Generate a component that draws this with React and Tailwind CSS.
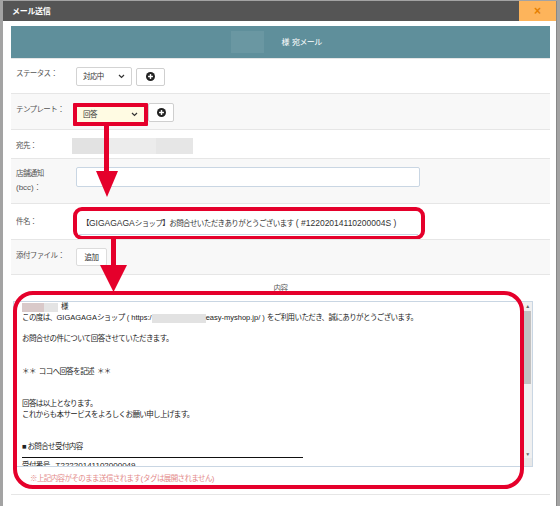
import React from 'react';

const RED = '#e5002b';

// latin runs keep normal spacing, only the kana/kanji are tightened
const L = ({ children, size = 'text-[8px]' }) => <span className={`tracking-normal ${size}`}>{children}</span>;

const PlusBtn = ({ className }) => (
  <div className={`flex items-center justify-center border border-[#cfcfcf] rounded-[2px] bg-white ${className}`}>
    <svg width="9" height="9" viewBox="0 0 10 10">
      <circle cx="5" cy="5" r="5" fill="#222" />
      <rect x="2.3" y="4.2" width="5.4" height="1.6" fill="#fff" />
      <rect x="4.2" y="2.3" width="1.6" height="5.4" fill="#fff" />
    </svg>
  </div>
);

const Chevron = () => (
  <svg width="7" height="5" viewBox="0 0 7 5" className="ml-auto">
    <path d="M1 1 L3.5 3.5 L6 1" fill="none" stroke="#333" strokeWidth="1.2" />
  </svg>
);

const Row = ({ label, h, gray, children, labelTop = 'pt-[10px]' }) => (
  <div className={`flex border-t border-[#e6e6e6] ${h} ${gray ? 'bg-[#f8f8f8]' : 'bg-white'}`}>
    <div className={`w-[65px] shrink-0 pl-[5px] text-[#555] ${labelTop}`}>{label}</div>
    <div className="flex-1">{children}</div>
  </div>
);

const App = () => {
  return (
    <div className="relative w-[560px] h-[506px] overflow-hidden bg-[#a3a3a3] font-['Liberation_Sans','Noto_Sans_CJK_JP',sans-serif] text-[7.5px] leading-[11px] tracking-[-0.6px] text-[#333]">
      <div className="ml-[3px] mt-[1px] w-[554px] h-[505px] bg-white flex flex-col border-r border-[#888]">
        {/* title bar */}
        <div className="h-[20px] bg-[#555555] flex items-center shrink-0">
          <span className="pl-[9px] text-white font-bold text-[8px] tracking-[-0.3px]">メール送信</span>
          <div className="ml-auto w-[37px] h-full bg-[#fdb45b] flex items-center justify-center text-[#e57f00] font-bold text-[12px] tracking-normal">×</div>
        </div>

        <div className="pl-[8px] pr-[6px] pt-[5px] flex flex-col">
          {/* header */}
          <div className="h-[32px] bg-[#5f8f9b] flex items-center justify-center gap-[17px] text-white text-[8px]">
            <div className="w-[33px] h-[22px] bg-[#6a97a2]" />
            <span className="pr-[8px]">様&nbsp;&nbsp;宛メール</span>
          </div>

          <Row label="ステータス：" h="h-[35px]" labelTop="pt-[9px]">
            <div className="flex items-center gap-[4px] pt-[8px]">
              <div className="w-[56px] h-[19px] border border-[#d3d3d3] rounded-[2px] bg-white flex items-center px-[6px]">
                <span>対応中</span>
                <Chevron />
              </div>
              <PlusBtn className="w-[29px] h-[18px]" />
            </div>
          </Row>

          <Row label="テンプレート：" h="h-[36px]" gray labelTop="pt-[10px]">
            <div className="flex items-start pt-[9px] -ml-[3px]">
              <div className="border-[4px] rounded-[1px]" style={{ borderColor: RED }}>
                <div className="w-[67px] h-[15px] bg-[#fffbe3] flex items-center px-[6px]">
                  <span>回答</span>
                  <Chevron />
                </div>
              </div>
              <PlusBtn className="w-[26px] h-[19px]" />
            </div>
          </Row>

          <Row label="宛先：" h="h-[29px]" labelTop="pt-[10px]">
            <div className="flex pt-[8px] -ml-[4px]">
              <div className="w-[36px] h-[16px] bg-[#e2e2e2]" />
              <div className="w-[48px] h-[16px] bg-[#ececec]" />
              <div className="w-[37px] h-[16px] bg-[#e6e6e6]" />
            </div>
          </Row>

          <Row
            label={<div className="leading-[14px]">店舗通知<br /><L>(bcc)</L>：</div>}
            h="h-[45px]"
            gray
            labelTop="pt-[8px]"
          >
            <div className="pt-[8px]">
              <div className="w-[344px] h-[20px] border border-[#c9d6e3] rounded-[2px] bg-white" />
            </div>
          </Row>

          <Row label="件名：" h="h-[36px]" labelTop="pt-[12px]">
            <div className="pt-[3px] -ml-[3px]">
              <div className="w-[352px] h-[33px] border-[4px] rounded-[9px] flex items-center" style={{ borderColor: RED }}>
                <div className="w-[340px] h-[22px] ml-[1px] border-b border-[#c9d6e3] flex items-center pl-[4px] whitespace-nowrap">
                  【<L size="text-[8.5px]">GIGAGAGA</L>ショップ】お問合せいただきありがとうございます<L size="text-[8.5px]">&nbsp;( #12202014110200004S )</L>
                </div>
              </div>
            </div>
          </Row>

          <Row label="添付ファイル：" h="h-[35px]" gray labelTop="pt-[10px]">
            <div className="pt-[8px]">
              <div className="w-[31px] h-[18px] border border-[#dcdcdc] rounded-[2px] bg-white flex items-center justify-center">追加</div>
            </div>
          </Row>

          {/* 内容 */}
          <div className="relative h-[221px] border-t border-b border-[#e6e6e6] bg-white">
            <div className="text-center pt-[8px] text-[#555]">内容</div>
            <div className="ml-[2px] mt-[7px] w-[520px] h-[166px] border border-[#c9d6e3] flex bg-white">
              <div className="flex-1 overflow-hidden pl-[8px] leading-[10.8px] text-[#222] whitespace-nowrap">
                <div className="flex items-center h-[10.8px]">
                  <div className="w-[22px] h-[9px] bg-[#d9c9c9]" />
                  <div className="w-[14px] h-[9px] bg-[#e4e4e4]" />
                  <span className="ml-[3px]">様</span>
                </div>
                <div className="flex items-center h-[10.8px]">
                  <span>この度は、<L size="text-[7.5px]">GIGAGAGA</L>ショップ<L size="text-[7.5px]">&nbsp;( https:/</L></span>
                  <div className="w-[54px] h-[9px] bg-[#e2e2e2]" />
                  <span><L size="text-[7.5px]">easy-myshop.jp/ )&nbsp;</L>をご利用いただき、誠にありがとうございます。</span>
                </div>
                <div className="h-[10.8px]" />
                <div>お問合せの件について回答させていただきます。</div>
                <div className="h-[10.8px]" />
                <div className="h-[10.8px]" />
                <div>＊＊&nbsp;&nbsp;ココへ回答を記述&nbsp;&nbsp;＊＊</div>
                <div className="h-[10.8px]" />
                <div className="h-[10.8px]" />
                <div>回答は以上となります。</div>
                <div>これからも本サービスをよろしくお願い申し上げます。</div>
                <div className="h-[10.8px]" />
                <div className="h-[10.8px]" />
                <div>■ お問合せ受付内容</div>
                <div className="w-[281px] border-t border-[#111] mt-[4px]" />
                <div className="mt-[3px]">受付番号&nbsp;&nbsp;&nbsp;&nbsp;<L>T22220141102000049</L></div>
              </div>
              <div className="w-[9px] bg-[#f0f0f0] flex flex-col items-center">
                <div className="h-[8px] flex items-center justify-center text-[#666] text-[5px] leading-none">▲</div>
                <div className="w-[7px] h-[73px] bg-[#c1c1c1] mt-[1px]" />
                <div className="flex-1" />
                <div className="h-[8px] flex items-center justify-center text-[#666] text-[5px] leading-none">▼</div>
                <div className="h-[8px] w-full bg-[#e8e8e8]" />
              </div>
            </div>
            <div className="pl-[19px] pt-[6px] text-[#e38a8a]">※上記内容がそのまま送信されます<L>(</L>タグは展開されません<L>)</L></div>
          </div>
        </div>
      </div>

      {/* annotation: big red box */}
      <div
        className="absolute left-[13px] top-[291px] w-[511px] h-[198px] border-[4px] rounded-[20px] pointer-events-none"
        style={{ borderColor: RED }}
      />

      {/* annotation arrows */}
      <svg className="absolute left-0 top-0 pointer-events-none" width="560" height="506">
        <rect x="104" y="126" width="5" height="47" fill={RED} />
        <polygon points="96,171 118,171 107,197" fill={RED} />
        <rect x="111" y="238" width="5" height="29" fill={RED} />
        <polygon points="100,265 127,265 113.5,292" fill={RED} />
      </svg>
    </div>
  );
};

export default App;
